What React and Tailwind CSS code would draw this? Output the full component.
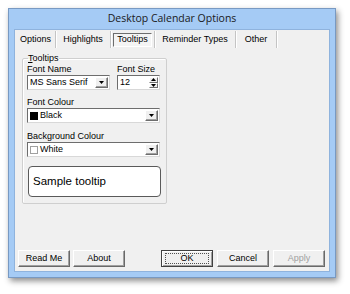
import React from 'react';

const ui = { fontFamily: '"Liberation Sans", Arial, sans-serif' };

const tabs = [
  { label: 'Options', w: 'w-[40px]' },
  { label: 'Highlights', w: 'w-[55px]' },
  { label: 'Tooltips', w: 'w-[44px]', active: true },
  { label: 'Reminder Types', w: 'w-[81px]' },
  { label: 'Other', w: 'w-[41px]' },
];

// small 3D drop-down button with a black arrow
const DropButton = () => (
  <div className="w-[13px] h-full bg-[#f0f0f0] border border-t-white border-l-white border-r-[#6d6d6d] border-b-[#6d6d6d] shadow-[inset_-1px_-1px_0_#a0a0a0] flex items-center justify-center">
    <svg width="5" height="3" viewBox="0 0 5 3">
      <path d="M0 0H5L2.5 3Z" fill="#000" />
    </svg>
  </div>
);

const Combo = ({ className = '', children }) => (
  <div
    className={`h-[15px] bg-white border border-t-[#6d6d6d] border-l-[#6d6d6d] border-r-[#d8d8d8] border-b-[#d8d8d8] flex items-stretch p-[1px] ${className}`}
  >
    <div className="flex-1 flex items-center gap-[2px] pl-[1px] text-[9px] leading-none text-black">
      {children}
    </div>
    <DropButton />
  </div>
);

const Button = ({ children, primary, disabled, className = '' }) => (
  <div
    className={`w-[52px] h-[17px] bg-[#f0f0f0] flex items-center justify-center text-[9px] leading-none ${
      primary
        ? 'border border-[#404040] shadow-[inset_1px_1px_0_white,inset_-1px_-1px_0_#a0a0a0]'
        : 'border border-t-white border-l-white border-r-[#696969] border-b-[#696969] shadow-[inset_-1px_-1px_0_#a0a0a0]'
    } ${disabled ? 'text-[#a0a0a0]' : 'text-black'} ${className}`}
  >
    {primary ? (
      <span className="w-[44px] h-[11px] border border-dotted border-[#505050] flex items-center justify-center">
        {children}
      </span>
    ) : (
      children
    )}
  </div>
);

export default function App() {
  return (
    <div className="w-[350px] h-[294px] bg-white pt-[8px] pl-[8px]" style={ui}>
      <div className="w-[328px] h-[270px] bg-[#a5cbf5] border border-[#7899c2] shadow-[2px_3px_6px_rgba(0,0,0,0.45)] flex flex-col px-[5px] pb-[5px]">
        <div
          className="h-[20px] flex items-center justify-center text-[10.5px] text-[#1a1a1a]"
          style={{ fontFamily: '"Open Sans", "Noto Sans", sans-serif' }}
        >
          Desktop Calendar Options
        </div>

        <div className="flex-1 bg-[#f0f0f0] border border-[#8fb3dd] flex flex-col">
          {/* tab strip */}
          <div className="h-[17px] mt-[1px] pl-[1px] flex items-stretch text-[9px] text-black">
            {tabs.map((t) => (
              <div
                key={t.label}
                className={`${t.w} flex items-center justify-center border-r border-r-[#c4c4c4] shadow-[1px_0_0_white]`}
              >
                {t.active ? (
                  <span className="h-[14px] px-[3px] flex items-center border border-t-[#6d6d6d] border-l-[#6d6d6d] border-r-white border-b-white bg-[#f4f4f4]">
                    {t.label}
                  </span>
                ) : (
                  t.label
                )}
              </div>
            ))}
          </div>

          {/* page */}
          <div className="flex-1 flex flex-col pt-[5px]">
            <fieldset className="ml-[7px] w-[145px] h-[151px] border border-[#cfcfcf] rounded-[2px] px-[4px] shadow-[inset_1px_1px_0_white]">
              <legend className="ml-[1px] text-[9px] leading-[10px] text-black">
                <span className="underline">T</span>ooltips
              </legend>

              <div className="flex gap-[7px] mt-[1px]">
                <div className="w-[83px] flex flex-col">
                  <div className="h-[11px] text-[9px] leading-[11px]">Font Name</div>
                  <Combo className="w-[83px]">MS Sans Serif</Combo>
                </div>
                <div className="w-[43px] flex flex-col">
                  <div className="h-[11px] text-[9px] leading-[11px]">Font Size</div>
                  <div className="h-[15px] bg-white border border-t-[#6d6d6d] border-l-[#6d6d6d] border-r-[#d8d8d8] border-b-[#d8d8d8] flex items-stretch p-[1px]">
                    <div className="flex-1 flex items-center pl-[1px] text-[9px] leading-none">12</div>
                    <div className="w-[9px] flex flex-col">
                      <div className="flex-1 bg-[#f0f0f0] border border-t-white border-l-white border-r-[#6d6d6d] border-b-[#6d6d6d] flex items-center justify-center">
                        <svg width="5" height="3" viewBox="0 0 5 3">
                          <path d="M0 3H5L2.5 0Z" fill="#000" />
                        </svg>
                      </div>
                      <div className="flex-1 bg-[#f0f0f0] border border-t-white border-l-white border-r-[#6d6d6d] border-b-[#6d6d6d] flex items-center justify-center">
                        <svg width="5" height="3" viewBox="0 0 5 3">
                          <path d="M0 0H5L2.5 3Z" fill="#000" />
                        </svg>
                      </div>
                    </div>
                  </div>
                </div>
              </div>

              <div className="mt-[7px] h-[11px] text-[9px] leading-[11px]">Font Colour</div>
              <Combo className="w-[133px]">
                <span className="w-[8px] h-[8px] bg-black" />
                Black
              </Combo>

              <div className="mt-[8px] h-[11px] text-[9px] leading-[11px]">Background Colour</div>
              <Combo className="w-[133px]">
                <span className="w-[8px] h-[8px] bg-white border border-[#a0a0a0]" />
                White
              </Combo>

              <div className="mt-[9px] ml-[1px] w-[133px] h-[31px] bg-white border border-[#5a5a5a] rounded-[4px] flex items-center pl-[4px] text-[11.5px] text-black">
                Sample tooltip
              </div>
            </fieldset>

            <div className="mt-auto mb-[4px] px-[3px] flex items-center">
              <Button>Read Me</Button>
              <Button className="ml-[3px]">About</Button>
              <Button primary className="ml-auto">OK</Button>
              <Button className="ml-[4px]">Cancel</Button>
              <Button disabled className="ml-[4px] mr-[1px]">Apply</Button>
            </div>
          </div>
        </div>
      </div>
    </div>
  );
}
